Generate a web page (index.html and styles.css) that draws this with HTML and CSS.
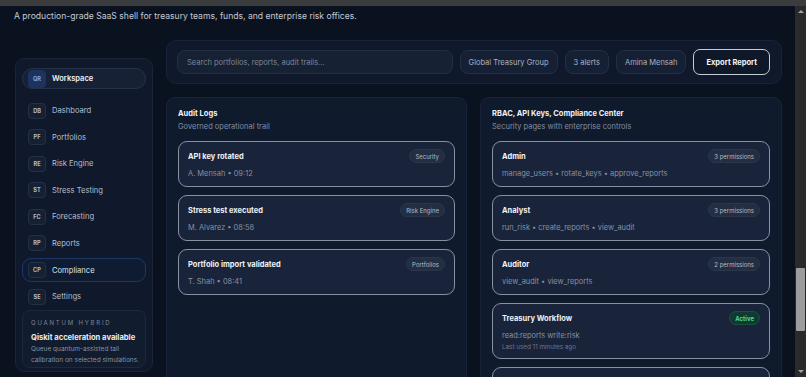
FILE: index.html
```html
<!DOCTYPE html>
<html lang="en">
<head>
  <meta charset="UTF-8" />
  <meta name="viewport" content="width=device-width, initial-scale=1" />
  <title>Treasury Risk Console</title>
  <link rel="stylesheet" href="styles.css">
</head>
<body>

<div class="topstrip"></div>

<div class="viewport">
  <div class="page">
    <p class="lede">A production-grade SaaS shell for treasury teams, funds, and enterprise risk offices.</p>

    <div class="shell">
      <aside class="sidebar">
        <div class="workspace">
          <span class="tag tag-blue">QR</span>
          <span class="workspace-name">Workspace</span>
        </div>

        <nav>
          <ul class="nav">
            <li><span class="tag">DB</span>Dashboard</li>
            <li><span class="tag">PF</span>Portfolios</li>
            <li><span class="tag">RE</span>Risk Engine</li>
            <li><span class="tag">ST</span>Stress Testing</li>
            <li><span class="tag">FC</span>Forecasting</li>
            <li><span class="tag">RP</span>Reports</li>
            <li class="active"><span class="tag">CP</span>Compliance</li>
            <li><span class="tag">SE</span>Settings</li>
          </ul>
        </nav>

        <div class="quantum">
          <div class="quantum-label">QUANTUM HYBRID</div>
          <div class="quantum-title">Qiskit acceleration available</div>
          <p>Queue quantum-assisted tail<br>calibration on selected simulations.</p>
        </div>
      </aside>

      <main class="main">
        <div class="toolbar">
          <div class="search">Search portfolios, reports, audit trails...</div>
          <span class="chip">Global Treasury Group</span>
          <span class="chip">3 alerts</span>
          <span class="chip">Amina Mensah</span>
          <button class="btn-export">Export Report</button>
        </div>

        <div class="panels">
          <section class="panel">
            <h2>Audit Logs</h2>
            <p class="panel-sub">Governed operational trail</p>
            <div class="list">
              <div class="item">
                <div class="item-head"><h3>API key rotated</h3><span class="pill">Security</span></div>
                <div class="meta">A. Mensah • 09:12</div>
              </div>
              <div class="item">
                <div class="item-head"><h3>Stress test executed</h3><span class="pill">Risk Engine</span></div>
                <div class="meta">M. Alvarez • 08:58</div>
              </div>
              <div class="item">
                <div class="item-head"><h3>Portfolio import validated</h3><span class="pill">Portfolios</span></div>
                <div class="meta">T. Shah • 08:41</div>
              </div>
            </div>
          </section>

          <section class="panel">
            <h2>RBAC, API Keys, Compliance Center</h2>
            <p class="panel-sub">Security pages with enterprise controls</p>
            <div class="list">
              <div class="item">
                <div class="item-head"><h3>Admin</h3><span class="pill">3 permissions</span></div>
                <div class="meta">manage_users • rotate_keys • approve_reports</div>
              </div>
              <div class="item">
                <div class="item-head"><h3>Analyst</h3><span class="pill">3 permissions</span></div>
                <div class="meta">run_risk • create_reports • view_audit</div>
              </div>
              <div class="item">
                <div class="item-head"><h3>Auditor</h3><span class="pill">2 permissions</span></div>
                <div class="meta">view_audit • view_reports</div>
              </div>
              <div class="item">
                <div class="item-head"><h3>Treasury Workflow</h3><span class="pill pill-green">Active</span></div>
                <div class="meta">read:reports write:risk</div>
                <div class="meta-small">Last used 11 minutes ago</div>
              </div>
              <div class="item item-blank"></div>
            </div>
          </section>
        </div>
      </main>
    </div>
  </div>

  <div class="scrollbar">
    <span class="arrow arrow-up"></span>
    <div class="track"><div class="thumb"></div></div>
    <span class="arrow arrow-down"></span>
  </div>
</div>

</body>
</html>
```

FILE: styles.css
```css
* {
  margin: 0; padding: 0; box-sizing: border-box;
  font-family: Inter, 'Noto Sans', sans-serif;
}
body {
  background: #0a1220;
  color: #e6ebf2;
  height: 377px;
  overflow: hidden;
}

.topstrip {
  height: 6px;
  background: #3b3c3e;
}

.viewport {
  display: flex;
  height: 371px;
  overflow: hidden;
}
.page {
  flex: 1;
  overflow: hidden;
}

.lede {
  font-size: 8.6px;
  line-height: 12px;
  color: #c3cad5;
  padding: 4px 0 0 14px;
}

.shell {
  display: grid;
  grid-template-columns: 138px 616px;
  gap: 13px;
  margin: 18px 0 0 15px;
  align-items: start;
}

/* sidebar */
.sidebar {
  margin-top: 18px;
  background: #0f192b;
  border: 1px solid #1a2538;
  border-radius: 9px;
  padding: 9px 6px 3px;
}
.workspace {
  display: flex;
  align-items: center;
  gap: 6px;
  height: 21px;
  padding: 0 5px;
  background: #162135;
  border: 1px solid #243147;
  border-radius: 10px;
}
.workspace-name {
  font-size: 7.5px;
  font-weight: 600;
  color: #eef2f7;
}
.tag {
  display: inline-flex;
  align-items: center;
  justify-content: center;
  width: 18px;
  height: 16px;
  border-radius: 4px;
  background: #162033;
  border: 1px solid #233047;
  font-size: 5.6px;
  font-weight: 700;
  color: #b3bccb;
  flex-shrink: 0;
}
.tag-blue {
  height: 18px;
  background: #1c3360;
  border-color: #1c3360;
  color: #7fa4e6;
}

.nav {
  list-style: none;
  margin-top: 9.5px;
  display: flex;
  flex-direction: column;
  gap: 2.6px;
}
.nav li {
  display: flex;
  align-items: center;
  gap: 6px;
  height: 24px;
  padding: 0 5px;
  border: 1px solid transparent;
  border-radius: 9px;
  font-size: 7.6px;
  color: #b5bfcc;
}
.nav li.active {
  background: #0e1b31;
  border-color: #1d3764;
  color: #dbe3ee;
}

.quantum {
  margin-top: 1px;
  border: 1px solid #1d283b;
  background: #111c2e;
  border-radius: 8px;
  padding: 7px 7px 1px 8px;
}
.quantum-label {
  font-size: 6px;
  letter-spacing: 1.8px;
  color: #7b8699;
  line-height: 10px;
}
.quantum-title {
  margin-top: 4px;
  font-size: 7.6px;
  font-weight: 700;
  color: #e9edf3;
  line-height: 11px;
  white-space: nowrap;
}
.quantum p {
  margin-top: 1px;
  font-size: 6.5px;
  line-height: 11px;
  color: #8791a3;
  white-space: nowrap;
}

/* toolbar */
.toolbar {
  display: flex;
  align-items: center;
  gap: 7px;
  height: 44px;
  padding: 0 11px 0 10px;
  background: #0f192b;
  border: 1px solid #18233a;
  border-radius: 10px;
}
.search {
  flex: 1;
  height: 24px;
  display: flex;
  align-items: center;
  padding: 0 9px;
  background: #162133;
  border: 1px solid #222e43;
  border-radius: 8px;
  font-size: 7.5px;
  color: #7c8697;
}
.chip {
  height: 24px;
  display: flex;
  align-items: center;
  padding: 0 8px;
  background: #152034;
  border: 1px solid #222f45;
  border-radius: 8px;
  font-size: 7.5px;
  color: #aab3c1;
}
.btn-export {
  height: 26px;
  padding: 0 12px;
  background: #0e1829;
  border: 1.5px solid #c5cdd8;
  border-radius: 7px;
  font-size: 7.5px;
  font-weight: 700;
  color: #f3f6fa;
}

/* panels */
.panels {
  display: grid;
  grid-template-columns: 301px 302px;
  gap: 13px;
  margin-top: 13px;
}
.panel {
  min-height: 420px;
  background: #0f1a2c;
  border: 1px solid #18233a;
  border-radius: 9px;
  padding: 10px 11px;
}
.panel h2 {
  font-size: 7.5px;
  font-weight: 700;
  line-height: 11px;
  color: #eef2f7;
}
.panel-sub {
  margin-top: 2px;
  font-size: 7.5px;
  line-height: 11px;
  color: #838da0;
}
.list {
  margin-top: 9px;
  display: flex;
  flex-direction: column;
  gap: 8px;
}
.item {
  background: #19243a;
  border: 1px solid #8691a4;
  border-radius: 9px;
  padding: 8px 9px 6px 9px;
}
.item-blank {
  height: 40px;
}
.item-head {
  display: flex;
  align-items: center;
  justify-content: space-between;
  height: 12px;
}
.item h3 {
  font-size: 7.5px;
  font-weight: 700;
  color: #eef2f7;
}
.pill {
  height: 14px;
  display: inline-flex;
  align-items: center;
  padding: 0 5px;
  background: #232e42;
  border: 1px solid #2a364b;
  border-radius: 7px;
  font-size: 6px;
  color: #b2bbc8;
}
.pill-green {
  background: #103a31;
  border-color: #17503f;
  color: #4fd692;
  font-weight: 700;
}
.meta {
  margin-top: 6px;
  font-size: 7.45px;
  line-height: 12px;
  color: #8690a2;
}
.meta-small {
  font-size: 6.3px;
  line-height: 10px;
  color: #6d778a;
}

/* fake window scrollbar */
.scrollbar {
  width: 11px;
  display: flex;
  flex-direction: column;
  background: #2a2a2b;
}
.arrow {
  height: 11px;
  display: flex;
  align-items: center;
  justify-content: center;
}
.arrow::before {
  content: "";
  border-left: 3px solid transparent;
  border-right: 3px solid transparent;
}
.arrow-up::before { border-bottom: 3px solid #a3a3a3; }
.arrow-down::before { border-top: 3px solid #a3a3a3; }
.track {
  flex: 1;
  padding-top: 251px;
  padding-left: 1px;
  padding-right: 1px;
}
.thumb {
  height: 63px;
  background: #9d9d9d;
  border-radius: 1px;
}
```
